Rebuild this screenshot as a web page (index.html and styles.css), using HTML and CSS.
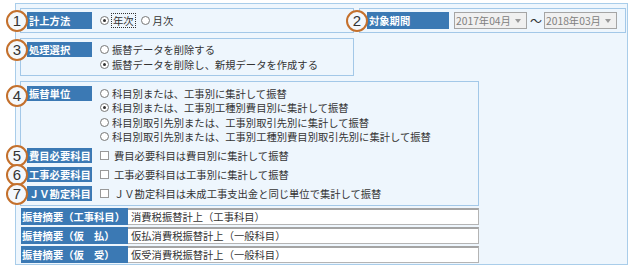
FILE: index.html
```html
<!DOCTYPE html>
<html lang="ja">
<head>
  <meta charset="UTF-8" />
  <title>消費税振替</title>
  <link rel="stylesheet" href="styles.css">
</head>
<body>

  <div class="painel">

    <div class="linha-topo">
      <div class="caixa caixa-metodo">
        <div class="rotulo rotulo-alto"><span class="marca">1</span>計上方法</div>
        <div class="opcoes-linha">
          <span class="opcao"><span class="radio marcado"></span><span class="foco">年次</span></span>
          <span class="opcao"><span class="radio"></span>月次</span>
        </div>
      </div>

      <div class="caixa caixa-periodo">
        <div class="rotulo rotulo-alto rotulo-periodo"><span class="marca">2</span>対象期間</div>
        <div class="seletor">2017年04月<span class="seta"></span></div>
        <span class="til">～</span>
        <div class="seletor">2018年03月<span class="seta"></span></div>
      </div>
    </div>

    <div class="caixa caixa-processo">
      <div class="rotulo"><span class="marca">3</span>処理選択</div>
      <div class="opcoes-coluna">
        <span class="opcao"><span class="radio"></span>振替データを削除する</span>
        <span class="opcao"><span class="radio marcado"></span>振替データを削除し、新規データを作成する</span>
      </div>
    </div>

    <div class="caixa caixa-unidade">
      <div class="item">
        <div class="rotulo"><span class="marca marca-baixa">4</span>振替単位</div>
        <div class="opcoes-coluna opcoes-unidade">
          <span class="opcao"><span class="radio"></span>科目別または、工事別に集計して振替</span>
          <span class="opcao"><span class="radio marcado"></span>科目別または、工事別工種別費目別に集計して振替</span>
          <span class="opcao"><span class="radio"></span>科目別取引先別または、工事別取引先別に集計して振替</span>
          <span class="opcao"><span class="radio"></span>科目別取引先別または、工事別工種別費目別取引先別に集計して振替</span>
        </div>
      </div>
      <div class="item">
        <div class="rotulo"><span class="marca">5</span>費目必要科目</div>
        <span class="opcao opcao-check"><span class="check"></span>費目必要科目は費目別に集計して振替</span>
      </div>
      <div class="item">
        <div class="rotulo"><span class="marca">6</span>工事必要科目</div>
        <span class="opcao opcao-check"><span class="check"></span>工事必要科目は工事別に集計して振替</span>
      </div>
      <div class="item">
        <div class="rotulo"><span class="marca">7</span>ＪＶ勘定科目</div>
        <span class="opcao opcao-check"><span class="check"></span>ＪＶ勘定科目は未成工事支出金と同じ単位で集計して振替</span>
      </div>
    </div>

    <div class="resumo">
      <div class="rotulo-tab">振替摘要（工事科目）</div>
      <div class="valor">消費税振替計上（工事科目）</div>
      <div class="rotulo-tab">振替摘要（仮　払）</div>
      <div class="valor">仮払消費税振替計上（一般科目）</div>
      <div class="rotulo-tab">振替摘要（仮　受）</div>
      <div class="valor">仮受消費税振替計上（一般科目）</div>
    </div>

  </div>

</body>
</html>
```

FILE: styles.css
```css
body {
  margin: 0;
  font-family: "Noto Sans CJK JP", sans-serif;
  font-size: 10.3px;
  color: #333;
  background: #fff;
}
.painel {
  width: 613px;
  height: 262px;
  margin: 3px 0 0 15px;
  box-sizing: border-box;
  border: 1px solid #a9cdea;
  background: #eef6fd;
  padding: 4px 0 0 4px;
}
.linha-topo {
  display: flex;
  gap: 5px;
}
.caixa {
  box-sizing: border-box;
  border: 1px solid #a3c8e8;
  background: #eef6fd;
  display: flex;
}
.caixa-metodo {
  width: 334px;
  height: 25px;
  padding: 3px 6px;
  align-items: center;
}
.caixa-periodo {
  width: 267px;
  height: 25px;
  padding: 3px 7px;
  align-items: center;
}
.caixa-processo {
  width: 334px;
  height: 38px;
  margin-top: 5px;
  padding: 3px 6px;
  align-items: flex-start;
}
.caixa-unidade {
  width: 459px;
  height: 125px;
  margin-top: 5px;
  padding: 4px 6px 0;
  flex-direction: column;
}
.rotulo {
  position: relative;
  width: 65px;
  height: 15px;
  line-height: 15px;
  padding-left: 2px;
  box-sizing: border-box;
  flex-shrink: 0;
  background: #3b79b4;
  color: #fff;
  font-weight: bold;
  white-space: nowrap;
}
.rotulo-alto {
  height: 17px;
  line-height: 17px;
}
.rotulo-periodo {
  width: 82px;
}
.marca {
  position: absolute;
  left: -21px;
  top: 50%;
  margin-top: -11px;
  width: 22px;
  height: 22px;
  box-sizing: border-box;
  border: 2px solid #c4702c;
  border-radius: 50%;
  background: #f4f8fc;
  color: #333;
  font-family: "Liberation Sans", sans-serif;
  font-weight: normal;
  font-size: 15px;
  line-height: 18px;
  text-align: center;
}
.marca-baixa {
  margin-top: -9px;
}
.opcoes-linha {
  display: flex;
  gap: 6px;
  margin-left: 8px;
}
.opcoes-coluna {
  display: flex;
  flex-direction: column;
  margin-left: 8px;
}
.opcao {
  display: inline-flex;
  align-items: center;
  gap: 3px;
  height: 15px;
  white-space: nowrap;
}
.opcoes-unidade .opcao {
  height: 14.5px;
}
.opcao-check {
  margin-left: 8px;
  gap: 5px;
}
.radio {
  position: relative;
  width: 9px;
  height: 9px;
  box-sizing: border-box;
  border: 1px solid #777;
  border-radius: 50%;
  background: #fff;
}
.radio.marcado::after {
  content: "";
  position: absolute;
  left: 2px;
  top: 2px;
  width: 3px;
  height: 3px;
  border-radius: 50%;
  background: #333;
}
.check {
  width: 9px;
  height: 9px;
  box-sizing: border-box;
  border: 1px solid #999;
  background: #fff;
}
.foco {
  outline: 1px dotted #333;
  padding: 0 1px;
  line-height: 13px;
}
.seletor {
  width: 73px;
  height: 17px;
  box-sizing: border-box;
  margin-left: 5px;
  padding: 0 5px 0 1px;
  border: 1px solid #a5a5a5;
  background: #f0f0f0;
  color: #808080;
  display: flex;
  align-items: center;
  justify-content: space-between;
}
.seta {
  width: 0;
  height: 0;
  border-left: 3.5px solid transparent;
  border-right: 3.5px solid transparent;
  border-top: 4px solid #999;
}
.til {
  margin-left: 3px;
  font-size: 12px;
}
.til + .seletor {
  margin-left: 2px;
}
.item {
  display: flex;
  align-items: flex-start;
}
.item + .item {
  margin-top: 4px;
}
.resumo {
  display: grid;
  grid-template-columns: 107px 351px;
  grid-auto-rows: 17px;
  row-gap: 2px;
  width: 458px;
  margin: 2px 0 0 1px;
}
.rotulo-tab {
  background: #3b79b4;
  color: #fff;
  font-weight: bold;
  line-height: 17px;
  padding-left: 1px;
  white-space: nowrap;
  overflow: hidden;
}
.valor {
  box-sizing: border-box;
  background: #fff;
  border: 1px solid #b4b4b4;
  border-top: 2px solid #a4a4a4;
  border-left: none;
  padding-left: 3px;
  line-height: 14px;
  white-space: nowrap;
}
```
